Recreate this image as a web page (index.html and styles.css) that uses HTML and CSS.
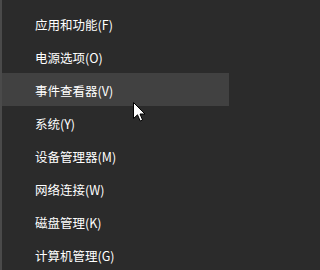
FILE: index.html
```html
<!DOCTYPE html>
<html lang="zh-CN">
<head>
<meta charset="utf-8">
<link rel="stylesheet" href="styles.css">
</head>
<body>
<div class="menu">
  <div class="item">应用和功能(F)</div>
  <div class="item">电源选项(O)</div>
  <div class="item hover">事件查看器(V)</div>
  <div class="item">系统(Y)</div>
  <div class="item">设备管理器(M)</div>
  <div class="item">网络连接(W)</div>
  <div class="item">磁盘管理(K)</div>
  <div class="item">计算机管理(G)</div>
</div>
<svg class="cursor" width="13" height="20" viewBox="0 0 13 20">
  <path d="M0.5 0.5 L0.5 16.5 L4.5 12.8 L7.2 19 L9.6 18 L7 12 L12 12 Z" fill="#fff" stroke="#000" stroke-width="1" stroke-linejoin="miter"/>
</svg>
</body>
</html>
```
FILE: styles.css
```css
html, body {
  margin: 0;
  padding: 0;
  background: #2b2b2b;
}
body {
  width: 229px;
  height: 270px;
  overflow: hidden;
  position: relative;
}
.menu {
  box-sizing: border-box;
  width: 229px;
  height: 270px;
  padding-top: 7px;
  border-left: 2px solid #4a4a4a;
  background: #2b2b2b;
  display: flex;
  flex-direction: column;
  font-family: "Noto Sans CJK SC", "Noto Sans", sans-serif;
  font-size: 12.5px;
  color: #ffffff;
}
.item {
  height: 33px;
  line-height: 33px;
  padding-left: 33px;
  padding-top: 1px;
  box-sizing: border-box;
  white-space: nowrap;
}
.hover {
  background: #414141;
}
.cursor {
  position: absolute;
  left: 133px;
  top: 102px;
}
```
